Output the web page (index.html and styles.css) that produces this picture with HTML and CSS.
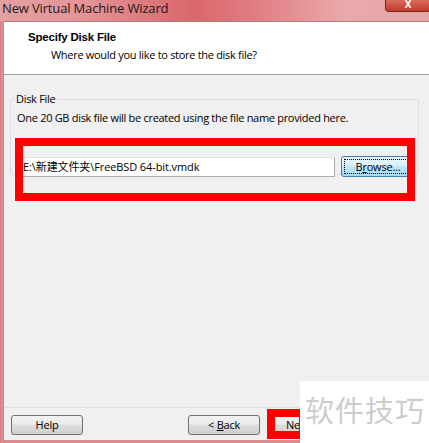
FILE: index.html
```html
<!DOCTYPE html>
<html>
<head>
<meta charset="utf-8">
<link rel="stylesheet" href="styles.css">
</head>
<body>
<div class="window">
  <div class="titlebar">
    <span class="title">New Virtual Machine Wizard</span>
    <span class="close">X</span>
  </div>
  <div class="client">
    <div class="frame-left"></div>
    <div class="content">
      <div class="header">
        <div class="h-title">Specify Disk File</div>
        <div class="h-sub">Where would you like to store the disk file?</div>
      </div>
      <div class="body">
        <fieldset class="group">
          <legend>Disk File</legend>
          <div class="desc">One 20 GB disk file will be created using the file name provided here.</div>
          <div class="file-row">
            <div class="input">E:\新建文件夹\FreeBSD 64-bit.vmdk</div>
            <div class="btn browse"><span class="focus">B<u>r</u>owse...</span></div>
          </div>
        </fieldset>
        <div class="mark mark-file"></div>
      </div>
      <div class="footer">
        <div class="btn help">Help</div>
        <div class="btn back">&lt; <u>B</u>ack</div>
        <div class="btn next">Ne</div>
        <div class="mark mark-next"></div>
      </div>
      <div class="frame-bottom"></div>
    </div>
  </div>
  <div class="watermark">软件技巧</div>
</div>
</body>
</html>
```
FILE: styles.css
```css
* { box-sizing: border-box; }
html, body { margin: 0; padding: 0; }
body { width: 429px; height: 443px; overflow: hidden; font-family: "Open Sans", "Noto Sans CJK SC", sans-serif; }
.window {
  position: relative;
  width: 429px; height: 443px;
  display: flex; flex-direction: column;
  background: #dc8f92;
}
.titlebar {
  height: 21px;
  display: flex; align-items: flex-start;
  background: linear-gradient(90deg, #e4a0a2 0%, #e49397 20%, #d9676d 45%, #e07f84 60%, #eaa8aa 80%, #e9a6a8 100%);
}
.title {
  font-size: 13px; color: #1a1a1a; padding-left: 2px; line-height: 16px; letter-spacing: -0.15px;
}
.close {
  margin-left: auto; margin-right: -2px;
  width: 46px; height: 12px;
  background: linear-gradient(#d96b5c, #c23b2b);
  border: 1px solid #6b2a22; border-top: none;
  border-radius: 0 0 4px 4px;
  color: #fff; font-size: 10px; font-weight: bold; line-height: 9px; text-align: center;
}
.client { flex: 1; display: flex; min-height: 0; }
.frame-left { width: 4px; background: linear-gradient(90deg, #d07c80, #e29da0); border-right: 1px solid #b8868a; }
.content { flex: 1; display: flex; flex-direction: column; background: #f0f0f0; border-top: 1px solid #b77a7e; }
.header {
  height: 53px; background: #fff; border-bottom: 1px solid #a0a0a0;
  padding: 7px 0 0 24px;
  font-size: 11px; color: #000; letter-spacing: -0.3px;
}
.h-title { font-family: "Liberation Sans", sans-serif; font-weight: bold; font-size: 11.5px; line-height: 16px; letter-spacing: -0.2px; }
.h-sub { padding-left: 23px; line-height: 16px; margin-top: 2px; }
.body { position: relative; flex: 1; padding: 17px 10px 0 6px; }
.group {
  margin: 0; height: 83px;
  border: 1px solid #d5dfe5; border-radius: 3px;
  padding: 0 0 0 6px;
  font-size: 11px; letter-spacing: -0.3px;
}
.group legend { padding: 0 2px 0 1px; margin-left: -2px; line-height: 14px; }
.desc { line-height: 16px; margin-top: 4px; }
.file-row { display: flex; margin-top: 30px; margin-left: -2px; align-items: center; }
.input {
  width: 320px; height: 20px; background: #fff;
  border: 1px solid #abadb3; border-top-color: #e3e3e3;
  font-size: 11px; line-height: 18px; padding-left: 7px; letter-spacing: -0.1px;
  white-space: nowrap; overflow: hidden;
}
.btn {
  height: 21px; font-size: 11px; line-height: 19px; text-align: center;
  border: 1px solid #707070; border-radius: 3px;
  background: linear-gradient(#f2f2f2 0%, #ebebeb 45%, #dddddd 50%, #cfcfcf 100%);
  color: #000; letter-spacing: -0.2px;
}
.browse {
  margin-left: 6px; width: 74px; padding: 2px;
  border-color: #3c7fb1;
  background: linear-gradient(#eaf6fd 0%, #d9f0fc 45%, #bee6fd 50%, #a7d9f5 100%);
}
.browse .focus { display: block; border: 1px dotted #000; line-height: 13px; height: 15px; }
.footer {
  position: relative;
  height: 33px; border-top: 1px solid #dfdfdf;
  display: flex; align-items: flex-start; padding: 7px 0 0 7px;
}
.help { width: 72px; height: 20px; line-height: 18px; }
.back { width: 72px; height: 20px; line-height: 18px; margin-left: 105px; }
.next { width: 72px; height: 20px; line-height: 18px; margin-left: 7px; text-align: left; padding-left: 18px; }
.frame-bottom { height: 3px; background: #d98c90; }
.mark { position: absolute; border: 8px solid #f00; }
.mark-file { left: 11px; top: 63px; width: 400px; height: 63px; }
.mark-next { left: 263px; top: 1px; width: 40px; height: 30px; }
.watermark {
  position: absolute; left: 300px; top: 381px; width: 129px; height: 62px;
  background: #fff; color: #cdcdcd;
  font-family: "Noto Sans CJK SC", sans-serif; font-size: 29px; line-height: 56px; padding-left: 5px;
  letter-spacing: 1px;
}
```
